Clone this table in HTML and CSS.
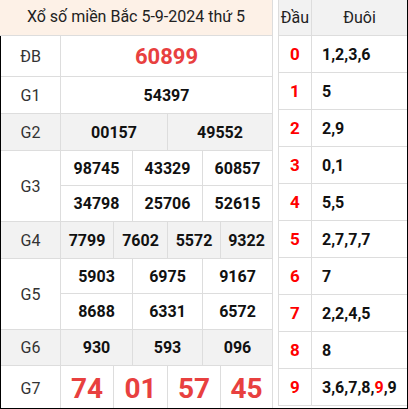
FILE: index.html
```html
<!DOCTYPE html>
<html>
<head>
<meta charset="utf-8">
<link rel="stylesheet" href="styles.css">
</head>
<body>
<div class="frame">
  <div class="kq">
    <div class="kq-head">Xổ số miền Bắc 5-9-2024 thứ 5</div>
    <div class="kq-body">
      <div class="row h40">
        <div class="lbl">ĐB</div>
        <div class="vals"><div class="sub"><span class="c db">60899</span></div></div>
      </div>
      <div class="row h36">
        <div class="lbl">G1</div>
        <div class="vals"><div class="sub"><span class="c">54397</span></div></div>
      </div>
      <div class="row h36 alt">
        <div class="lbl">G2</div>
        <div class="vals"><div class="sub two"><span class="c">00157</span><span class="c">49552</span></div></div>
      </div>
      <div class="row">
        <div class="lbl">G3</div>
        <div class="vals">
          <div class="sub three h34"><span class="c">98745</span><span class="c">43329</span><span class="c">60857</span></div>
          <div class="sub three h34"><span class="c">34798</span><span class="c">25706</span><span class="c">52615</span></div>
        </div>
      </div>
      <div class="row h36 alt">
        <div class="lbl">G4</div>
        <div class="vals"><div class="sub four"><span class="c">7799</span><span class="c">7602</span><span class="c">5572</span><span class="c">9322</span></div></div>
      </div>
      <div class="row">
        <div class="lbl">G5</div>
        <div class="vals">
          <div class="sub three h34"><span class="c">5903</span><span class="c">6975</span><span class="c">9167</span></div>
          <div class="sub three h34"><span class="c">8688</span><span class="c">6331</span><span class="c">6572</span></div>
        </div>
      </div>
      <div class="row h35 alt">
        <div class="lbl">G6</div>
        <div class="vals"><div class="sub three"><span class="c">930</span><span class="c">593</span><span class="c">096</span></div></div>
      </div>
      <div class="row h44 last">
        <div class="lbl">G7</div>
        <div class="vals"><div class="sub four"><span class="c g7">74</span><span class="c g7">01</span><span class="c g7">57</span><span class="c g7">45</span></div></div>
      </div>
    </div>
  </div>
  <div class="lt">
    <div class="lt-row lt-head"><div class="dau">Đầu</div><div class="duoi center">Đuôi</div></div>
    <div class="lt-row"><div class="dau red">0</div><div class="duoi">1,2,3,6</div></div>
    <div class="lt-row"><div class="dau red">1</div><div class="duoi">5</div></div>
    <div class="lt-row"><div class="dau red">2</div><div class="duoi">2,9</div></div>
    <div class="lt-row"><div class="dau red">3</div><div class="duoi">0,1</div></div>
    <div class="lt-row"><div class="dau red">4</div><div class="duoi">5,5</div></div>
    <div class="lt-row"><div class="dau red">5</div><div class="duoi">2,7,7,7</div></div>
    <div class="lt-row"><div class="dau red">6</div><div class="duoi">7</div></div>
    <div class="lt-row"><div class="dau red">7</div><div class="duoi">2,2,4,5</div></div>
    <div class="lt-row"><div class="dau red">8</div><div class="duoi">8</div></div>
    <div class="lt-row"><div class="dau red">9</div><div class="duoi">3,6,7,8,<span class="hl">9</span>,9</div></div>
  </div>
</div>
</body>
</html>
```

FILE: styles.css
```css
* { box-sizing: border-box; }
html, body { margin: 0; padding: 0; background: #fff; }
body { font-family: Roboto, "Noto Sans", sans-serif; color: #222; }

.frame {
  width: 408px;
  height: 409px;
  display: flex;
  align-items: flex-start;
  gap: 5px;
  border-right: 1px solid #000;
  border-bottom: 1px solid #000;
  overflow: hidden;
}

/* left results table */
.kq {
  width: 273px;
  flex: none;
  border-right: 1px solid #ddd;
  display: flex;
  flex-direction: column;
}
.kq-head {
  height: 36px;
  background: #fdf1e7;
  border-bottom: 1px solid #ddd;
  font-size: 16px;
  line-height: 34px;
  text-align: center;
  color: #222;
}
.kq-body { border-left: 1px solid #000; display: flex; flex-direction: column; }
.row { display: flex; border-bottom: 1px solid #ddd; }
.row.last { border-bottom: none; }
.row.alt { background: #f2f2f2; }
.h40 { height: 41px; }
.h36 { height: 37px; }
.h35 { height: 36px; }
.h44 { height: 44px; }
.lbl {
  width: 60px;
  flex: none;
  border-right: 1px solid #ddd;
  display: flex;
  align-items: center;
  justify-content: center;
  font-size: 16px;
  color: #333;
}
.vals { flex: 1; display: flex; flex-direction: column; }
.sub { flex: 1; display: flex; }
.sub.h34 { height: 35px; flex: none; }
.sub.h34:first-child { border-bottom: 1px solid #ddd; height: 35px; }
.c {
  flex: 1;
  display: flex;
  align-items: center;
  justify-content: center;
  font-weight: 700;
  font-size: 16px;
  color: #111;
  border-right: 1px solid #ddd;
}
.c:last-child { border-right: none; }
.two .c:first-child { flex: none; width: 107px; }
.three .c:nth-child(1) { flex: none; width: 72px; }
.three .c:nth-child(2) { flex: none; width: 70px; }
.four .c:nth-child(1) { flex: none; width: 53px; }
.four .c:nth-child(2) { flex: none; width: 54px; }
.four .c:nth-child(3) { flex: none; width: 53px; }
.c.db { font-size: 22px; color: #e8403f; }
.c.g7 { font-size: 28px; color: #e8403f; }

/* right loto table */
.lt {
  flex: 1;
  border-left: 1px solid #ddd;
  display: flex;
  flex-direction: column;
}
.lt-row { display: flex; height: 37px; border-bottom: 1px solid #ddd; }
.lt-head { height: 36px; background: #f2f2f2; }
.dau {
  width: 33px;
  flex: none;
  border-right: 1px solid #ddd;
  display: flex;
  align-items: center;
  justify-content: center;
  font-size: 16px;
  color: #222;
}
.dau.red { color: #f00; font-weight: 700; font-size: 17px; }
.duoi {
  flex: 1;
  display: flex;
  align-items: center;
  padding-left: 10px;
  font-weight: 700;
  font-size: 16px;
  color: #111;
}
.duoi.center { justify-content: center; padding-left: 0; font-weight: 400; color: #222; }
.hl { color: #f00; }
```
